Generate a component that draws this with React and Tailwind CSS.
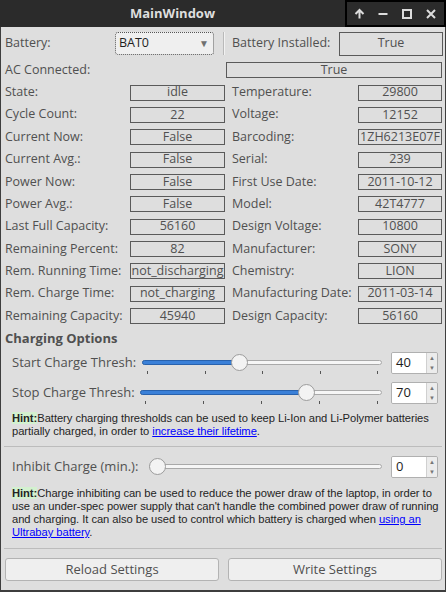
import { useState } from 'react'

const leftRows = [
	['State:', 'idle'],
	['Cycle Count:', '22'],
	['Current Now:', 'False'],
	['Current Avg.:', 'False'],
	['Power Now:', 'False'],
	['Power Avg.:', 'False'],
	['Last Full Capacity:', '56160'],
	['Remaining Percent:', '82'],
	['Rem. Running Time:', 'not_discharging'],
	['Rem. Charge Time:', 'not_charging'],
	['Remaining Capacity:', '45940'],
]

const rightRows = [
	['Temperature:', '29800'],
	['Voltage:', '12152'],
	['Barcoding:', '1ZH6213E07F'],
	['Serial:', '239'],
	['First Use Date:', '2011-10-12'],
	['Model:', '42T4777'],
	['Design Voltage:', '10800'],
	['Manufacturer:', 'SONY'],
	['Chemistry:', 'LION'],
	['Manufacturing Date:', '2011-03-14'],
	['Design Capacity:', '56160'],
]

function ValueBox({ value, className }) {
	return (
		<div className={`h-[16px] border border-[#5a5a5a] flex items-center justify-center overflow-hidden whitespace-nowrap leading-none ${className}`}>
			{value}
		</div>
	)
}

function TitleBar() {
	return (
		<div className="h-[27px] bg-[#2b2b2b] flex items-stretch shrink-0">
			<div className="flex-1 flex items-center justify-center text-[13px] font-bold text-[#dedede]">MainWindow</div>
			<div className="w-[101px] border-2 border-black flex items-center text-[#dcdcdc]">
				<div className="w-[24px] flex justify-center">
					<svg width="11" height="11" viewBox="0 0 11 11" fill="none" stroke="currentColor" strokeWidth="2">
						<path d="M5.5 10.5V2M1.5 6l4-4 4 4" />
					</svg>
				</div>
				<div className="w-[24px] flex justify-center">
					<svg width="10" height="10" viewBox="0 0 10 10" fill="none" stroke="currentColor" strokeWidth="2">
						<path d="M0.5 5h9" />
					</svg>
				</div>
				<div className="w-[24px] flex justify-center">
					<svg width="10" height="10" viewBox="0 0 10 10" fill="none" stroke="currentColor" strokeWidth="2">
						<rect x="1" y="1" width="8" height="8" />
					</svg>
				</div>
				<div className="w-[24px] flex justify-center">
					<svg width="10" height="10" viewBox="0 0 10 10" fill="none" stroke="currentColor" strokeWidth="2">
						<path d="M1 1l8 8M9 1l-8 8" />
					</svg>
				</div>
			</div>
		</div>
	)
}

function Slider({ value, ticks }) {
	const f = value / 100
	return (
		<div className="relative flex-1 h-full">
			<div className="absolute left-0 right-0 top-[12px] h-[5px] rounded-full bg-[#f6f6f6] border border-[#a9a9a9]" />
			{value > 0 && (
				<div
					className="absolute left-0 top-[12px] h-[5px] rounded-full bg-[#3a80d8] border border-[#2862ad]"
					style={{ width: `calc(${f} * (100% - 17px) + 8px)` }}
				/>
			)}
			<div
				className="absolute top-[6px] size-[17px] rounded-full bg-[#f3f3f3] border border-[#9c9c9c]"
				style={{ left: `calc(${f} * (100% - 17px))` }}
			/>
			{ticks &&
				[0, 1, 2, 3, 4].map((i) => (
					<div
						key={i}
						className="absolute top-[23px] w-px h-[3px] bg-[#555]"
						style={{ left: `calc(5px + ${i / 4} * (100% - 10px))` }}
					/>
				))}
		</div>
	)
}

function SpinBox({ value }) {
	return (
		<div className="ml-[9px] mr-[4px] w-[47px] h-[22px] flex border border-[#b0b0b0] rounded-[2px] overflow-hidden">
			<div className="flex-1 bg-white flex items-center pl-[4px] text-[13px] text-[#1d1d1d]">{value}</div>
			<div className="w-[11px] bg-[#ececec] border-l border-[#d0d0d0] flex flex-col items-center justify-around text-[#777] text-[6px] leading-none">
				<span>▲</span>
				<span>▼</span>
			</div>
		</div>
	)
}

function SliderRow({ label, labelWidth, value, ticks }) {
	return (
		<div className="h-[30px] flex items-center pl-[7px]">
			<div className={`${labelWidth} shrink-0 text-[13px]`}>{label}</div>
			<Slider value={value} ticks={ticks} />
			<SpinBox value={value} />
		</div>
	)
}

function Hint({ children, className }) {
	return (
		<p className={`pl-[7px] font-['Liberation_Sans',Arial,sans-serif] text-[11.2px] tracking-[-0.05px] leading-[13.2px] text-[#242424] ${className}`}>
			<span className="font-bold bg-[#d3f1cf]">Hint:</span>
			{children}
		</p>
	)
}

export default function App() {
	const [battery] = useState('BAT0')

	return (
		<div className="w-[446px] h-[592px] flex flex-col bg-[#dedede] font-['Open_Sans',sans-serif] text-[12.5px] text-[#505050]">
			<TitleBar />
			<div className="flex-1 flex flex-col border-x border-b-2 border-[#3e3e3e] pl-[4px] pr-[3px]">
				<div className="mt-[4px] h-[25px] flex items-center">
					<div className="w-[110px]">Battery:</div>
					<div className="w-[99px] h-[23px] bg-[#efefef] border border-dotted border-[#555] rounded-[3px] flex items-center justify-between pl-[3px] pr-[4px]">
						<span className="text-[#1f1f1f]">{battery}</span>
						<span className="text-[#707070] text-[10px]">▼</span>
					</div>
					<div className="ml-[9px] w-[2px] h-[23px] border-l border-[#b9b9b9] border-r border-r-[#f2f2f2]" />
					<div className="ml-[7px] flex-1">Battery Installed:</div>
					<div className="w-[104px] h-[24px] border border-[#5a5a5a] flex items-center justify-center -mr-px">True</div>
				</div>

				<div className="mt-[3px] h-[22.35px] flex items-center">
					<div className="w-[221px]">AC Connected:</div>
					<ValueBox value="True" className="flex-1" />
				</div>

				{leftRows.map(([l, v], i) => (
					<div key={l} className="h-[22.35px] flex items-center">
						<div className="w-[125px] shrink-0 whitespace-nowrap">{l}</div>
						<ValueBox value={v} className="w-[95px]" />
						<div className="ml-[7px] flex-1 whitespace-nowrap">{rightRows[i][0]}</div>
						<ValueBox value={rightRows[i][1]} className="w-[84px]" />
					</div>
				))}

				<div className="mt-[3px] h-[18px] flex items-center text-[13px] font-bold">Charging Options</div>

				<SliderRow label="Start Charge Thresh:" labelWidth="w-[130px]" value={40} ticks />
				<SliderRow label="Stop Charge Thresh:" labelWidth="w-[128px]" value={70} ticks />

				<Hint className="mt-[4px]">
					Battery charging thresholds can be used to keep Li-Ion and Li-Polymer batteries partially charged, in order to{' '}
					<a href="#" className="text-[#0000ff] underline">increase their lifetime</a>.
				</Hint>

				<div className="mt-[7px] h-px bg-[#bcbcbc] -ml-px" />

				<div className="mt-[5px]">
					<SliderRow label="Inhibit Charge (min.):" labelWidth="w-[137px]" value={0} />
				</div>

				<Hint className="mt-[5px]">
					Charge inhibiting can be used to reduce the power draw of the laptop, in order to use an under-spec power supply that can't handle the combined power draw of running and charging. It can also be used to control which battery is charged when{' '}
					<a href="#" className="text-[#0000ff] underline">using an Ultrabay battery</a>.
				</Hint>

				<div className="mt-[9px] h-px bg-[#bcbcbc] -ml-px" />

				<div className="mt-[9px] h-[23px] flex gap-[9px]">
					<button className="flex-1 bg-[#efefef] border border-[#b3b3b3] rounded-[3px] text-[13px] text-[#505050]">Reload Settings</button>
					<button className="flex-1 bg-[#efefef] border border-[#b3b3b3] rounded-[3px] text-[13px] text-[#505050]">Write Settings</button>
				</div>
			</div>
		</div>
	)
}
